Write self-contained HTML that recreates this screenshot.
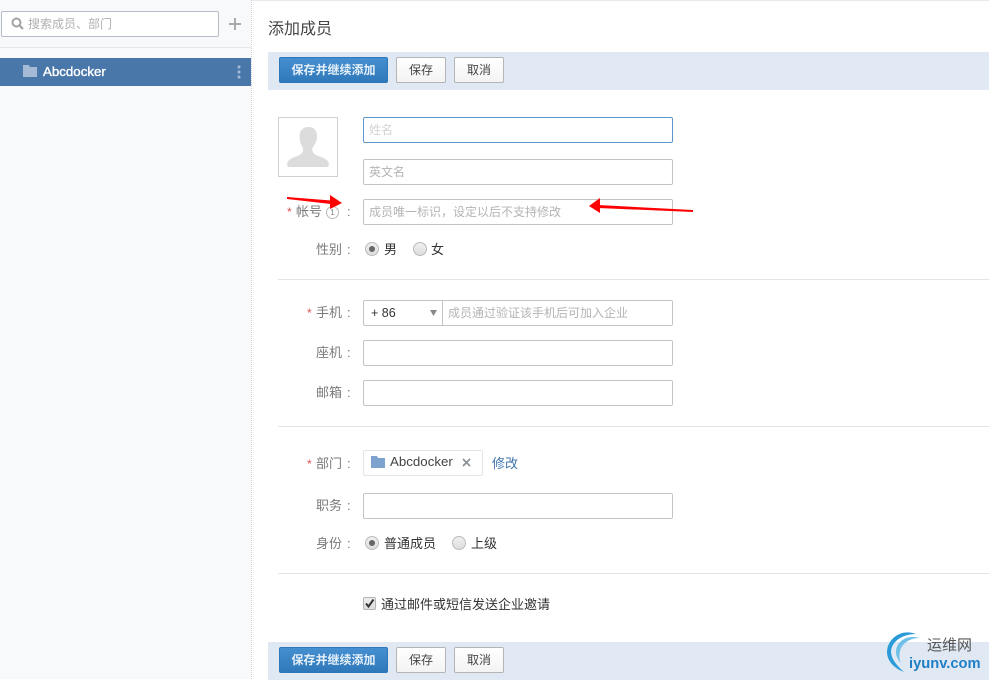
<!DOCTYPE html>
<html><head><meta charset="utf-8">
<style>
*{box-sizing:border-box}
html,body{margin:0;padding:0}
body{width:989px;height:679px;overflow:hidden;background:#fff;position:relative;font-family:"Liberation Sans","Noto Sans CJK SC",sans-serif;font-size:12px;color:#444}
.a{position:absolute;white-space:nowrap}
.inp{position:absolute;left:363px;width:310px;height:26px;border:1px solid #c4c4c4;border-radius:2px;background:#fff}
.ph{position:absolute;left:369px;color:#b4b4b4;font-size:12px;line-height:16px;white-space:nowrap}
.lb{position:absolute;color:#7a7a7a;font-size:13px;line-height:18px;white-space:nowrap}
.lb i{position:absolute;left:31px;top:0;font-style:normal}
.st{position:absolute;color:#d9534f;font-size:12px;line-height:18px}
.bar{position:absolute;left:268px;width:721px;height:38px;background:#dfe8f3}
.bp{position:absolute;left:11px;top:5px;width:109px;height:26px;border-radius:2px;background:linear-gradient(#4590d2,#2f78b9);border:1px solid #2e77b8;color:#e6f0f9;font-size:12px;font-weight:bold;text-align:center;line-height:24px}
.bd{position:absolute;top:5px;width:50px;height:26px;border-radius:2px;background:linear-gradient(#fff,#f3f3f3);border:1px solid #b5b5b5;color:#444;font-size:12px;text-align:center;line-height:24px}
.hr{position:absolute;left:278px;width:711px;height:1px;background:#e4e4e4}
.r{position:absolute;width:14px;height:14px;border-radius:50%;border:1px solid #bbb;background:linear-gradient(#f0f0f0,#ddd)}
.r.on::after{content:"";position:absolute;left:3px;top:3px;width:6px;height:6px;border-radius:50%;background:#666}
.t{position:absolute;color:#333;font-size:13px;line-height:18px;white-space:nowrap}
</style></head><body>
<div class="a" style="left:0;top:0;width:989px;height:1px;background:#e6e8ea"></div>
<div class="a" style="left:0;top:0;width:251px;height:679px;background:#f8f9fb"></div>
<div class="a" style="left:251px;top:0;width:1px;height:679px;border-left:1px dotted #cfd1d4"></div>
<div class="a" style="left:1px;top:11px;width:218px;height:26px;background:#fff;border:1px solid #b3bcc8;border-radius:2px"></div>
<svg class="a" style="left:11px;top:17px" width="13" height="13" viewBox="0 0 13 13"><circle cx="5.500" cy="5.500" r="4" fill="none" stroke="#a3a3a3" stroke-width="2"/><path d="M8.500 8.500l3.500 3.500" stroke="#a3a3a3" stroke-width="2.200"/></svg>
<div class="a" style="left:28px;top:16px;font-size:12px;line-height:16px;color:#b0b0b0">搜索成员、部门</div>
<svg class="a" style="left:229px;top:18px" width="12" height="12"><path d="M6 0v12M0 6h12" stroke="#a9a9a9" stroke-width="2"/></svg>
<div class="a" style="left:0;top:47px;width:251px;height:1px;background:#e4e6e9"></div>
<div class="a" style="left:0;top:58px;width:251px;height:28px;background:#4a77aa"></div>
<svg class="a" style="left:23px;top:65px" width="14" height="12"><path d="M0 0h6l1 2h7v10H0z" fill="#a5bad5"/></svg>
<div class="a" style="left:43px;top:64px;font-size:13.300px;line-height:16px;color:#fff;-webkit-text-stroke:.35px #fff">Abcdocker</div>
<svg class="a" style="left:237px;top:65px" width="4" height="14"><circle cx="2" cy="2" r="1.500" fill="#a5bad5"/><circle cx="2" cy="7" r="1.500" fill="#a5bad5"/><circle cx="2" cy="12" r="1.500" fill="#a5bad5"/></svg>

<div class="a" style="left:268px;top:20px;font-size:16px;line-height:20px;color:#444">添加成员</div>
<div class="bar" style="top:52px"><div class="bp">保存并继续添加</div><div class="bd" style="left:128px">保存</div><div class="bd" style="left:186px">取消</div></div>

<div class="a" style="left:278px;top:117px;width:60px;height:60px;border:1px solid #d0d0d0;background:#fff"></div>
<svg class="a" style="left:287px;top:126px" width="42" height="42" viewBox="0 0 42 42"><path d="M21.500 1c-6 0-9 4-9 9.500 0 5 2 9 3.500 11.500.5 3-.5 5.500-3.500 7C8 31 2 32.500.5 36.500 0 38 0 40 1 41h40c1-1 1-3 .5-4.500C40 32.500 34 31 29 29c-3-1.500-4-4-3.500-7 1.500-2.500 4.500-6.500 4.500-11.500C30 5 27.500 1 21.500 1z" fill="#dcdcdc"/></svg>

<div class="inp" style="top:117px;border-color:#5f97cc"></div><div class="ph" style="top:122px;color:#d4d4d4">姓名</div>
<div class="inp" style="top:159px"></div><div class="ph" style="top:164px">英文名</div>
<div class="inp" style="top:199px"></div><div class="ph" style="top:204px">成员唯一标识，设定以后不支持修改</div>

<div class="st" style="left:287px;top:203px">*</div>
<div class="lb" style="left:296px;top:203px">帐号</div>
<div class="a" style="left:326px;top:206px;width:13px;height:13px;border:1px solid #bbb;border-radius:50%;font-size:8px;line-height:11px;text-align:center;color:#888">1</div>
<div class="lb" style="left:347px;top:203px">:</div>
<div class="lb" style="left:316px;top:241px">性别<i>:</i></div>
<div class="r on" style="left:365px;top:242px"></div><div class="t" style="left:384px;top:241px">男</div>
<div class="r" style="left:413px;top:242px"></div><div class="t" style="left:431px;top:241px">女</div>
<div class="hr" style="top:279px"></div>

<div class="st" style="left:307px;top:304px">*</div>
<div class="lb" style="left:316px;top:304px">手机<i>:</i></div>
<div class="inp" style="top:300px"></div>
<div class="a" style="left:442px;top:300px;width:1px;height:26px;background:#c4c4c4"></div>
<div class="a" style="left:371px;top:305px;font-size:12.500px;line-height:16px;color:#333">+ 86</div>
<svg class="a" style="left:430px;top:310px" width="7" height="6"><path d="M0 0h7L3.500 6z" fill="#888"/></svg>
<div class="a" style="left:448px;top:305px;font-size:12px;line-height:16px;color:#b4b4b4">成员通过验证该手机后可加入企业</div>
<div class="lb" style="left:316px;top:344px">座机<i>:</i></div><div class="inp" style="top:340px"></div>
<div class="lb" style="left:316px;top:384px">邮箱<i>:</i></div><div class="inp" style="top:380px"></div>
<div class="hr" style="top:426px"></div>

<div class="st" style="left:307px;top:455px">*</div>
<div class="lb" style="left:316px;top:455px">部门<i>:</i></div>
<div class="a" style="left:363px;top:450px;width:120px;height:26px;border:1px solid #e2e4e8;border-radius:2px;background:#fff"></div>
<svg class="a" style="left:371px;top:456px" width="14" height="12"><path d="M0 0h6l1 2h7v10H0z" fill="#7ea3cf"/></svg>
<div class="a" style="left:390px;top:454px;font-size:13.300px;line-height:16px;color:#444">Abcdocker</div>
<svg class="a" style="left:462px;top:458px" width="9" height="9"><path d="M1 1l7 7M8 1l-7 7" stroke="#8a8f96" stroke-width="1.600"/></svg>
<div class="a" style="left:492px;top:455px;font-size:13px;line-height:17px;color:#3f74ad">修改</div>
<div class="lb" style="left:316px;top:497px">职务<i>:</i></div><div class="inp" style="top:493px"></div>
<div class="lb" style="left:316px;top:535px">身份<i>:</i></div>
<div class="r on" style="left:365px;top:536px"></div><div class="t" style="left:384px;top:535px">普通成员</div>
<div class="r" style="left:452px;top:536px"></div><div class="t" style="left:471px;top:535px">上级</div>
<div class="hr" style="top:573px"></div>

<div class="a" style="left:363px;top:597px;width:13px;height:13px;border:1px solid #b5b5b5;border-radius:2px;background:linear-gradient(#eee,#ddd)"></div>
<svg class="a" style="left:364px;top:598px" width="11" height="11"><path d="M2 5.500l2.500 3L9.500 1.500" fill="none" stroke="#333" stroke-width="2"/></svg>
<div class="t" style="left:381px;top:596px">通过邮件或短信发送企业邀请</div>

<div class="bar" style="top:642px"><div class="bp">保存并继续添加</div><div class="bd" style="left:128px">保存</div><div class="bd" style="left:186px">取消</div></div>

<svg class="a" style="left:287px;top:194px" width="56" height="16"><path d="M0 3L44 6.500V10L0 5z" fill="#f00"/><path d="M55 9L43 1V15z" fill="#f00"/></svg>
<svg class="a" style="left:588px;top:197px" width="106" height="17"><path d="M10 8L105 13V15L10 11z" fill="#f00"/><path d="M1 9L12 1V16z" fill="#f00"/></svg>

<svg class="a" style="left:884px;top:630px" width="50" height="45" viewBox="0 0 50 45"><path d="M32 4C16-2 3 10 3 22c0 8 6 16 17 20-9-8-13-14-13-21C8 11 19 4 32 4z" fill="#2a9bd8"/><path d="M36 8C22 4 12 12 12 22c0 4 2 8 5 11-2-4-2-8-1-12C18 13 26 8 36 8z" fill="#6fc0e8"/></svg>
<div class="a" style="left:927px;top:637px;font-size:15px;line-height:18px;color:#555">运维网</div>
<div class="a" style="left:909px;top:655px;font-size:14.700px;line-height:18px;font-weight:bold;color:#1f7fc6">iyunv.com</div>
</body></html>
